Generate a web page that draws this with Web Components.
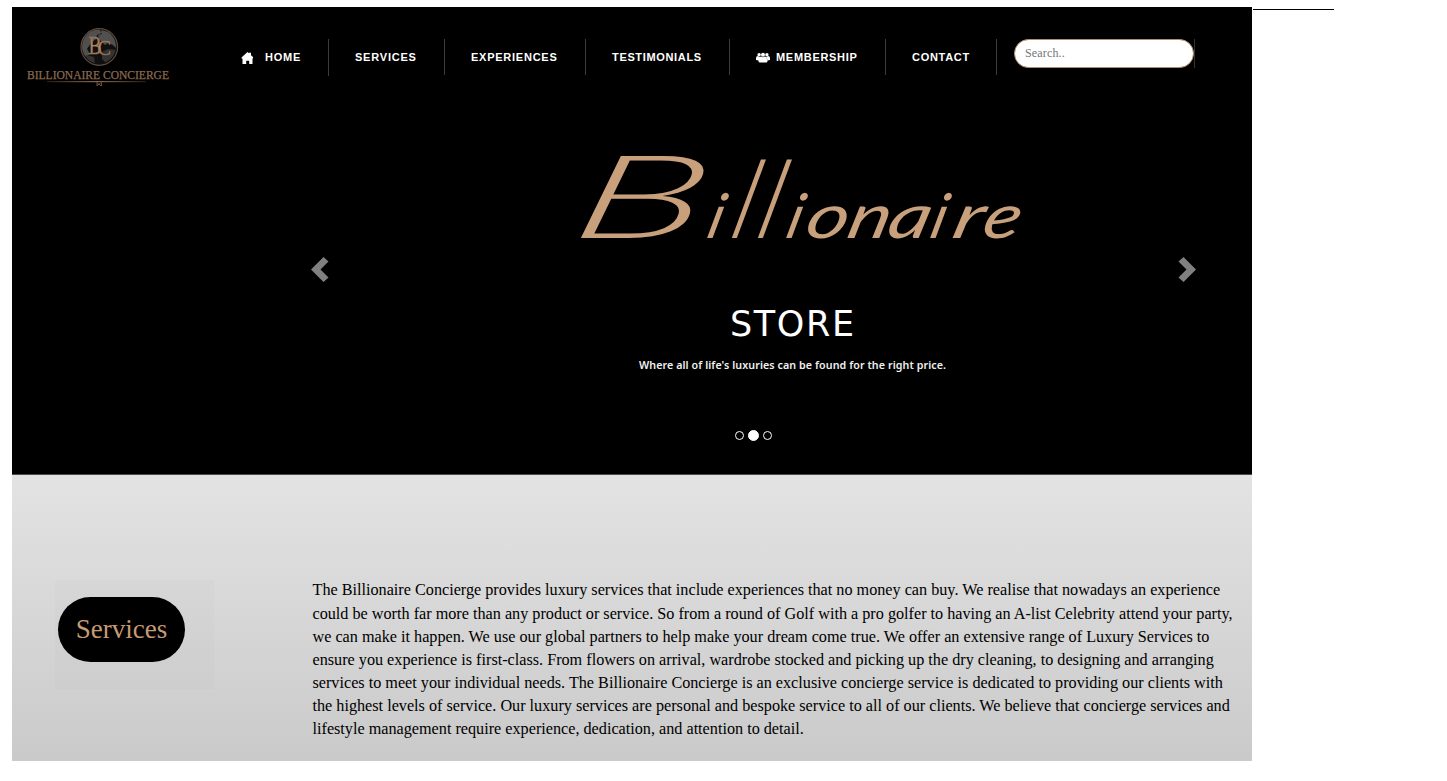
<!DOCTYPE html>
<html lang="en"><head><meta charset="utf-8"><title>Billionaire Concierge</title>
<style>body{margin:0;background:#fff;font-family:"Liberation Serif",serif;color:#000}</style></head><body>
<bc-page></bc-page>
<script>
const define=(name,html)=>customElements.define(name,class extends HTMLElement{
 constructor(){super();this.attachShadow({mode:'open'}).innerHTML=html;}
});
define('bc-logo',`<style>:host{display:block;width:160px;height:70px}svg{display:block}</style>
<svg width="160" height="70" viewBox="20 22 160 70"><defs>
<linearGradient id="g" x1="0" y1="0" x2="0" y2="1"><stop offset="0" stop-color="#7b5c42"/><stop offset=".5" stop-color="#b58a64"/><stop offset="1" stop-color="#8d6849"/></linearGradient>
<linearGradient id="l"><stop offset="0" stop-color="#241b15"/><stop offset=".5" stop-color="#87684c"/><stop offset="1" stop-color="#241b15"/></linearGradient>
<clipPath id="c"><circle cx="99" cy="46.5" r="17"/></clipPath></defs>
<circle cx="99.300" cy="47" r="18.300" fill="#101010" stroke="#644b39" stroke-width="1.2"/>
<g clip-path="url(#c)" fill="#505050"><path d="M82 40l8-9 9-2 3 4-5 2-1 4-5 4-4 6 3 5-4 3-6-6zM101 30l8 2 9 9-1 8-4-4-5-2-3 2-5-5-2-5 4-1z" /><path d="M102 52l6-3 8 1-2 7-8 6-4-4zM86 55l8 2 1 7-8-4z" fill="#333"/></g>
<text x="88.500" y="54" font-family="Liberation Serif" font-size="25" fill="url(#g)" stroke="#a07856" stroke-width=".3"><tspan textLength="13" lengthAdjust="spacingAndGlyphs">B</tspan><tspan x="97.500" y="55" font-size="20" textLength="13.500" lengthAdjust="spacingAndGlyphs">C</tspan></text>
<text x="27" y="78.700" font-family="Liberation Serif" font-size="11.700" textLength="142" lengthAdjust="spacingAndGlyphs" fill="#8a6a4f" stroke="#8a6a4f" stroke-width=".25">BILLIONAIRE CONCIERGE</text>
<rect x="47" y="81" width="99" height="1.200" fill="url(#l)"/><path d="M97 82.500l2 2 2-2M97 86l2-2 2 2M97 82.500v3.500M101.500 82.500v3.500" fill="none" stroke="#7a5c43" stroke-width=".9"/></svg>`);
define('bc-nav-item',`<style>:host{display:flex;box-sizing:border-box;height:36px;padding-left:26px;border-right:1px solid #3b3b3b;align-items:center;font:bold 11px/36px "Liberation Sans",Arial,sans-serif;letter-spacing:.7px;color:#fff;white-space:nowrap}
::slotted(svg){flex:none}</style><slot></slot>`);
define('bc-search',`<style>:host{display:flex;box-sizing:border-box;width:198px;height:29px;padding-left:17px;border-right:1px solid #333}
input{box-sizing:border-box;width:180px;height:29px;border:1px solid #b28d69;border-radius:15px;background:#fff;padding:0 10px;font:12px "Liberation Serif",serif;color:#333;letter-spacing:.15px}input::placeholder{color:#757575;opacity:1}</style><input placeholder="Search..">`);
define('bc-header',`<style>:host{display:flex;height:90px}bc-logo{margin:15px 0 0 8px;flex:none}nav{display:flex;margin:32px 0 0 49px;align-items:flex-start}</style>
<bc-logo></bc-logo><nav>
<bc-nav-item style="width:100px;height:37px;padding:0 0 1px 12px;letter-spacing:.78px"><svg width="12" height="12" viewBox="0 0 12 12" style="margin:2px 12px 0 0"><path d="M6.500 0L8 1.300V.7h2v2.500L12.500 5.600v1h-1V12H8.200V8.700H5.200V12H1.500V6.600H.5v-1z" fill="#fff"/></svg>HOME</bc-nav-item>
<bc-nav-item style="width:116px;letter-spacing:.78px">SERVICES</bc-nav-item><bc-nav-item style="width:141px;letter-spacing:.75px">EXPERIENCES</bc-nav-item><bc-nav-item style="width:144px;letter-spacing:.66px">TESTIMONIALS</bc-nav-item>
<bc-nav-item style="width:156px"><svg width="14" height="11" viewBox="0 0 14 11" style="margin:1px 6px 0 0" fill="#fff"><circle cx="7" cy="2.700" r="2"/><circle cx="3.100" cy="2.700" r="1.700"/><circle cx="10.900" cy="2.700" r="1.700"/><path d="M0 8V6q0-2 2-2 1 1 2 1-1 1-1.500 3.500zM14 8V6q0-2-2-2-1 1-2 1 1 1 1.500 3.500zM2.500 9q0-4 2.500-4.500 2 1.500 4 0 2.500.5 2.500 4.500 0 1.500-1.500 1.500H4q-1.500 0-1.500-1.500z"/></svg>MEMBERSHIP</bc-nav-item><bc-nav-item style="width:111px">CONTACT</bc-nav-item><bc-search></bc-search></nav>`);
define('bc-hero',`<style>:host{display:flex;box-sizing:border-box;height:377px;padding-left:299px}
.arrow{width:18px;height:27px;margin-top:159px;flex:none}.slide{width:849px;flex:none}.slide svg{display:block}
.dots{display:flex;gap:4px;align-items:center;height:11px;margin:1px 0 0 406px}.dots i{box-sizing:border-box;width:9px;height:9px;border:1px solid #fff;border-radius:50%}.dots .on{width:11px;height:11px;background:#fff}</style>
<svg class="arrow" viewBox="0 0 18 27"><path d="M0 13.500L12.500 1 17.500 5.500 9.500 13.500 17.500 21.500 12.500 26z" fill="#808080"/></svg>
<div class="slide"><svg width="849" height="332" viewBox="329 97 849 332">
<g transform="translate(0 238) skewX(-14)"><text y="0" font-family="Lato,sans-serif" font-weight="400" font-style="italic" font-size="62" fill="#c8a07c"><tspan x="567" font-size="116" font-weight="300" textLength="132" lengthAdjust="spacingAndGlyphs">B</tspan><tspan x="705">i</tspan><tspan x="727" font-size="108" font-weight="300">l</tspan><tspan x="753" font-size="108" font-weight="300">l</tspan><tspan x="784">i</tspan><tspan x="803" textLength="42" lengthAdjust="spacingAndGlyphs">o</tspan><tspan x="845" textLength="42" lengthAdjust="spacingAndGlyphs">n</tspan><tspan x="885" textLength="42" lengthAdjust="spacingAndGlyphs">a</tspan><tspan x="928">i</tspan><tspan x="950" textLength="30" lengthAdjust="spacingAndGlyphs">r</tspan><tspan x="980" textLength="37" lengthAdjust="spacingAndGlyphs">e</tspan></text></g>
<text x="730" y="336" font-family="DejaVu Sans,sans-serif" font-size="35" textLength="124" fill="#fff">STORE</text>
<text x="639" y="369" font-family="Noto Sans,sans-serif" font-weight="600" font-size="10.700" textLength="307" fill="#f0f0f0">Where all of life's luxuries can be found for the right price.</text></svg>
<div class="dots"><i></i><i class="on"></i><i></i></div></div>
<svg class="arrow" viewBox="0 0 18 27"><path d="M18 13.500L5.500 1 .5 5.500 8.500 13.500 .5 21.500 5.500 26z" fill="#808080"/></svg>`);
define('bc-services',`<style>:host{display:flex;box-sizing:border-box;height:287px;border-top:1px solid #4b4b4b;background:linear-gradient(#e3e3e3,#cacaca);padding:105px 0 0 43px}
.card{box-sizing:border-box;width:159px;height:109px;padding:17px 3px;background:rgba(0,0,0,.01);flex:none}.pill{width:127px;height:65px;border-radius:33px;background:#000;color:#c89b73;font-size:27px;line-height:65px;text-align:center}
p{margin:-.600px 0 0 98.500px;font-size:16.200px;line-height:23.100px;white-space:nowrap}p span{display:block}</style>
<div class="card"><div class="pill">Services</div></div>
<p><span>The Billionaire Concierge provides luxury services that include experiences that no money can buy. We realise that nowadays an experience</span><span>could be worth far more than any product or service. So from a round of Golf with a pro golfer to having an A-list Celebrity attend your party,</span><span>we can make it happen. We use our global partners to help make your dream come true. We offer an extensive range of Luxury Services to</span><span>ensure you experience is first-class. From flowers on arrival, wardrobe stocked and picking up the dry cleaning, to designing and arranging</span><span>services to meet your individual needs. The Billionaire Concierge is an exclusive concierge service is dedicated to providing our clients with</span><span>the highest levels of service. Our luxury services are personal and bespoke service to all of our clients. We believe that concierge services and</span><span>lifestyle management require experience, dedication, and attention to detail.</span></p>`);
define('bc-page',`<style>:host{display:flex;align-items:flex-start;padding:7px 0 0 12px;height:774px;overflow:hidden}main{width:1240px;background:#000;flex:none}hr{width:81px;height:1px;margin:2px 0 0 1px;border:0;background:#000}</style><main><bc-header></bc-header><bc-hero></bc-hero><bc-services></bc-services></main><hr>`);
</script></body></html>
